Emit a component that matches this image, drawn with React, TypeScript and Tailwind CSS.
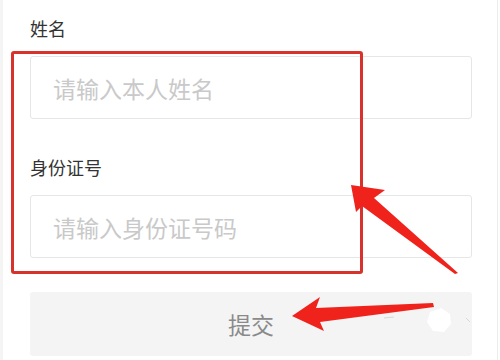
import React from 'react'

const FONT = { fontFamily: '"Noto Sans CJK SC", "Noto Sans", sans-serif' }

function Field({ label, placeholder }: { label: string; placeholder: string }) {
  return (
    <div className="flex flex-col gap-[18px]">
      <div className="text-[18px] leading-[20px] text-[#333333]">{label}</div>
      <input
        readOnly
        placeholder={placeholder}
        className="block h-[63px] w-full rounded-[3px] border border-[#e6e6e6] bg-white pl-[22px] text-[23px] text-[#333] outline-none placeholder:text-[#c9c9c9]"
        style={FONT}
      />
    </div>
  )
}

export default function App() {
  return (
    <div className="relative flex h-[360px] w-[500px] overflow-hidden bg-white" style={FONT}>
      <div className="w-[3px] bg-[#f4f4f4]" />

      <div className="flex flex-1 flex-col pl-[27px] pr-[25px] pt-[18px]">
        <div className="flex flex-col gap-[38px]">
          <Field label="姓名" placeholder="请输入本人姓名" />
          <Field label="身份证号" placeholder="请输入身份证号码" />
        </div>
        <button className="mt-[34px] flex h-[64px] w-full items-center justify-center rounded-[3px] bg-[#f4f4f4] text-[23px] text-[#8a8a8a]">
          提交
        </button>
      </div>

      <div className="mr-[2px] w-px bg-[#ececec]" />

      {/* annotation frame over the form */}
      <div className="pointer-events-none absolute left-[11px] top-[51px] h-[223px] w-[352px] rounded-[3px] border-[3px] border-[#d8322d]" />

      <svg className="pointer-events-none absolute left-0 top-0" width="500" height="360" viewBox="0 0 500 360">
        <path d="M430 312 L441 308 L450 314 L451 324 L444 332 L433 331 L427 322 Z" fill="#ffffff" />
        <path d="M384 318 L394 317" stroke="#d8d8d8" strokeWidth="1" />
        <path d="M466 318 L470 322" stroke="#d8d8d8" strokeWidth="1" />
        <polygon points="351,185 385,190 374,198 458,273 455,274 362,206 356,212" fill="#f0231c" />
        <polygon points="292,316 320,297 316,308 433,303 434,307 320,322 324,331" fill="#f0231c" />
      </svg>
    </div>
  )
}
